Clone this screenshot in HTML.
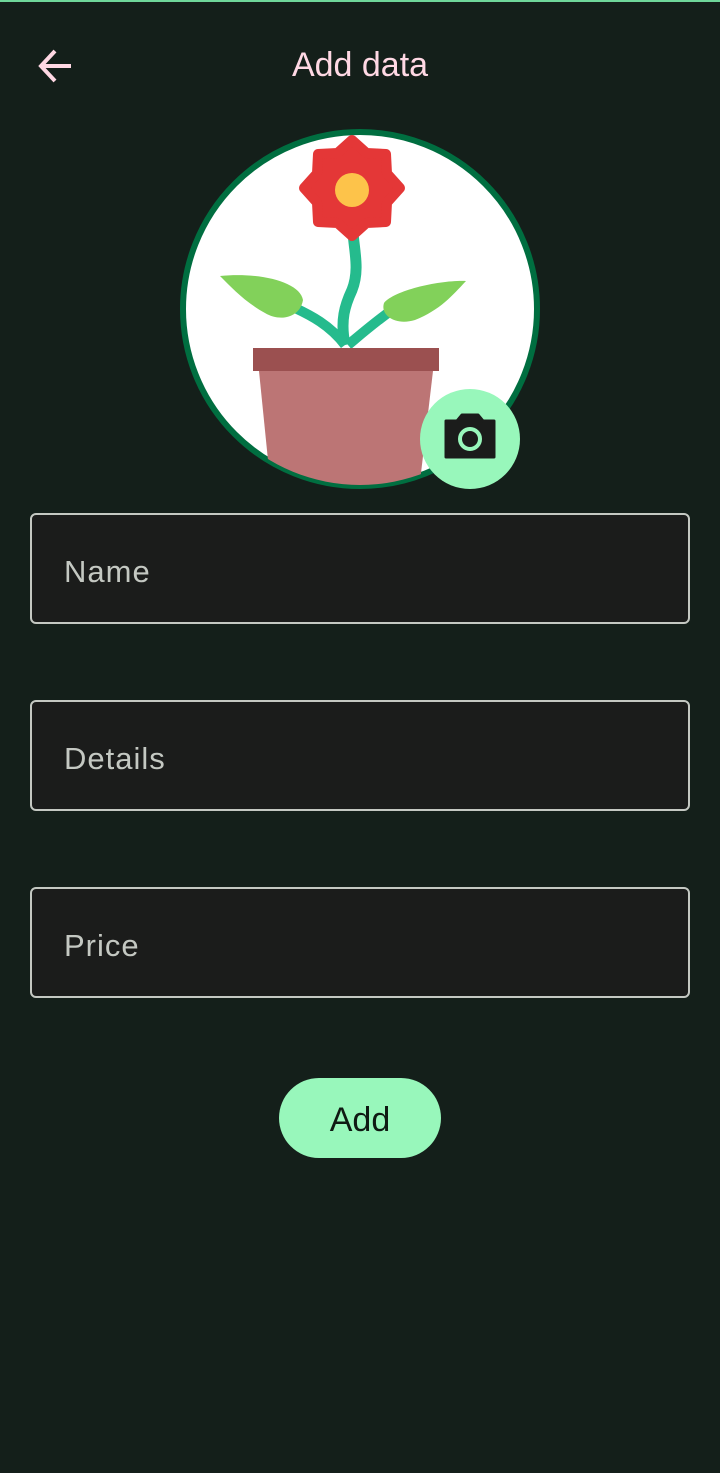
<!DOCTYPE html>
<html><head><style>
body{margin:0;width:720px;height:1473px;background:#141f1a;font-family:"Liberation Sans",Roboto,sans-serif;position:relative;overflow:hidden}
.top{position:absolute;top:0;left:0;width:720px;height:2px;background:#6fd79a}
.title{position:absolute;top:46px;left:0;width:720px;text-align:center;color:#ffd8e4;font-size:34px}
.field{position:absolute;left:30px;width:660px;height:111px;border:2px solid #c4c8c2;border-radius:6px;background:#1b1c1b;box-sizing:border-box}
.field span{position:absolute;left:32px;top:39px;color:#c4c8c2;font-size:31px;letter-spacing:1px}
.btn{position:absolute;left:279px;top:1078px;width:162px;height:80px;border-radius:40px;background:#98f7bb;color:#0f1a13;font-size:34px;text-align:center;line-height:84px}
</style></head><body>
<div class="top"></div>
<svg style="position:absolute;left:36px;top:46px" width="40" height="40" viewBox="0 0 40 40"><path d="M35 20H6M19 5L5 20l14 15" fill="none" stroke="#ffd8e4" stroke-width="4"/></svg>
<div class="title">Add data</div>
<svg style="position:absolute;left:0;top:0" width="720" height="500">
<defs><clipPath id="c"><circle cx="360" cy="309" r="176"/></clipPath></defs>
<circle cx="360" cy="309" r="177" fill="#fff" stroke="#006e40" stroke-width="6"/>
<g clip-path="url(#c)">
<path d="M345 345C340 320 345 305 352 290C360 270 354 250 353 232" fill="none" stroke="#25bb8d" stroke-width="11"/>
<path d="M345 345C330 325 310 315 295 308M348 345C360 335 375 322 392 310" fill="none" stroke="#25bb8d" stroke-width="10"/>
<path d="M220 276C260 272 300 282 303 300C300 318 280 322 265 313C245 302 232 288 220 276Z" fill="#82d15a"/>
<path d="M466 281C440 280 395 290 384 303C380 315 395 326 415 320C440 310 452 296 466 281Z" fill="#82d15a"/>
<path d="M352 140L366.5 153L386 154L387 173.5L400 188L387 202.5L386 222L366.5 223L352 236L337.5 223L318 222L317 202.5L304 188L317 173.5L318 154L337.5 153Z" fill="#e43737" stroke="#e43737" stroke-width="10" stroke-linejoin="round"/>
<circle cx="352" cy="190" r="17" fill="#fdc34a"/>
<path d="M259 371H433L419 490H271Z" fill="#bc7575"/>
<rect x="253" y="348" width="186" height="23" fill="#9b5050"/>
</g>
<circle cx="470" cy="439" r="50" fill="#98f7bb"/>
<path d="M446 421h11l5-6h16l5 6h11v36h-48z" fill="#1b1c1b" stroke="#1b1c1b" stroke-width="3" stroke-linejoin="round"/>
<circle cx="470" cy="439" r="10" fill="none" stroke="#98f7bb" stroke-width="4"/>
</svg>
<div class="field" style="top:513px"><span>Name</span></div>
<div class="field" style="top:700px"><span>Details</span></div>
<div class="field" style="top:887px"><span>Price</span></div>
<div class="btn">Add</div>
</body></html>
